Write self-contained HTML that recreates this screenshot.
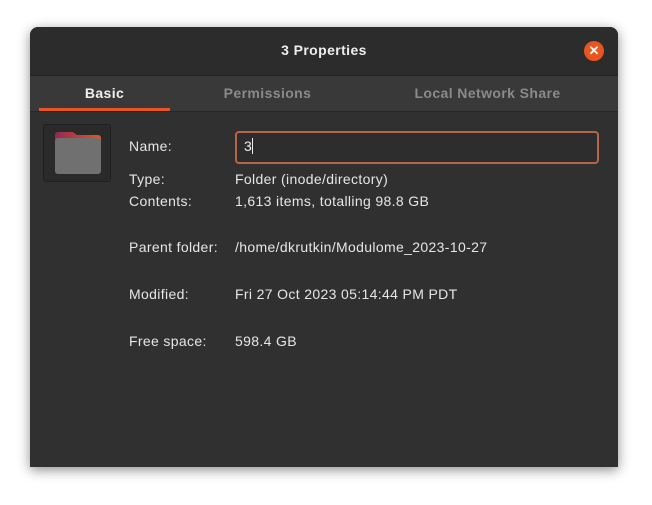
<!DOCTYPE html>
<html><head><style>
body{margin:0;width:652px;height:505px;background:#fff;font-family:"Liberation Sans",sans-serif;position:relative;overflow:hidden}
.win{position:absolute;left:30px;top:27px;width:588px;height:440px;background:#303030;border-radius:8px 8px 0 0;box-shadow:0 3px 12px rgba(0,0,0,.45);overflow:hidden}
.title{position:absolute;left:0;top:0;width:588px;height:48px;background:#2c2c2c;border-bottom:1px solid #232323;color:#eee;font-weight:bold;font-size:14px;text-align:center;line-height:47px;letter-spacing:.4px}
.close{position:absolute;left:554px;top:14px;width:20px;height:20px;border-radius:50%;background:#e95420;color:#fff;font-size:13px;line-height:20px;text-align:center;letter-spacing:0}
.tabs{position:absolute;left:0;top:49px;width:588px;height:35px;background:#393939;border-bottom:1px solid #262626}
.tab{position:absolute;top:0;height:35px;line-height:34px;font-size:14px;font-weight:bold;color:#8a8a8a;text-align:center;letter-spacing:.4px}
.ul{position:absolute;left:9px;top:32px;width:131px;height:3px;background:#e95420}
.icon{position:absolute;left:13px;top:97px;width:66px;height:56px;background:#2a2a2a;border:1px solid #1f1f1f;border-radius:3px}
.l,.v{position:absolute;font-size:14px;color:#e6e6e6;letter-spacing:.35px}
.l{left:99px}.v{left:205px}
.entry{position:absolute;left:205px;top:104px;width:360px;height:29px;border:2px solid #b8644a;border-radius:4px;background:#2d2d2d}
</style></head><body>
<div class="win">
<div class="title">3 Properties<div class="close">✕</div></div>
<div class="tabs">
<div class="tab" style="left:9px;width:131px;color:#f0f0f0">Basic</div>
<div class="tab" style="left:160px;width:155px">Permissions</div>
<div class="tab" style="left:365px;width:185px">Local Network Share</div>
<div class="ul"></div>
</div>
<div class="icon"><svg width="66" height="56"><defs><linearGradient id="g" x1="0" x2="1"><stop offset="0" stop-color="#8e2a55"/><stop offset="1" stop-color="#e95420"/></linearGradient></defs><path d="M14 7h15l4 3h21a3 3 0 0 1 3 3v8H11V10a3 3 0 0 1 3-3z" fill="url(#g)"/><rect x="11" y="13" width="46" height="36" rx="3" fill="#707070"/></svg></div>
<div class="l" style="top:111px">Name:</div>
<div class="entry"><span style="position:absolute;left:7px;top:5px;font-size:14px;color:#eee">3<span style="display:inline-block;width:1px;height:16px;background:#eee;vertical-align:-3px"></span></span></div>
<div class="l" style="top:144px">Type:</div><div class="v" style="top:144px">Folder (inode/directory)</div>
<div class="l" style="top:166px">Contents:</div><div class="v" style="top:166px">1,613 items, totalling 98.8 GB</div>
<div class="l" style="top:212px">Parent folder:</div><div class="v" style="top:212px">/home/dkrutkin/Modulome_2023-10-27</div>
<div class="l" style="top:259px">Modified:</div><div class="v" style="top:259px">Fri 27 Oct 2023 05:14:44 PM PDT</div>
<div class="l" style="top:306px">Free space:</div><div class="v" style="top:306px">598.4 GB</div>
</div>
</body></html>
